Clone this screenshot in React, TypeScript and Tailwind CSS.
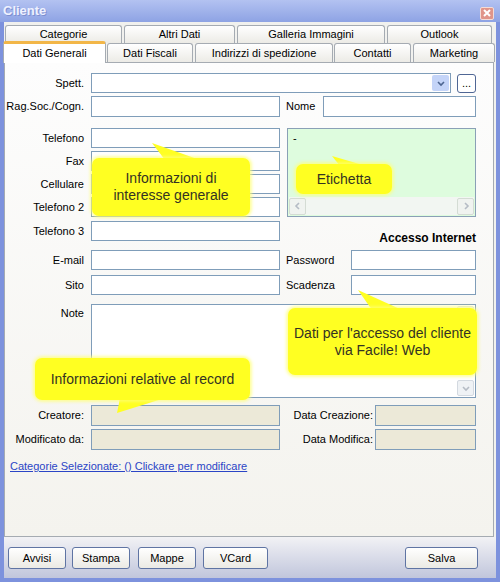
import React from "react";

const field = "border border-[#7f9db9] bg-white shrink-0";
const ro = "border border-[#7f9db9] bg-[#ece9d8] shrink-0";
const backTab =
  "flex items-center justify-center border border-b-0 border-[#a5abb2] rounded-t-[3px] bg-gradient-to-b from-white to-[#ecebe6] text-[11px] text-black";
const btn =
  "h-[22px] flex items-center justify-center rounded-[3px] border border-[#5f74a3] bg-gradient-to-b from-white to-[#ebeae4] text-[11px] text-black";

function Chevron({ dir, color = "#b5bcc5" }: { dir: "l" | "r" | "u" | "d"; color?: string }) {
  const pts = {
    l: "6,2 3,5 6,8",
    r: "4,2 7,5 4,8",
    u: "2,6 5,3 8,6",
    d: "2,4 5,7 8,4",
  }[dir];
  return (
    <svg width="10" height="10" viewBox="0 0 10 10">
      <polyline points={pts} fill="none" stroke={color} strokeWidth="1.6" />
    </svg>
  );
}

function Callout({
  box,
  tail,
  children,
}: {
  box: string;
  tail: string;
  children: React.ReactNode;
}) {
  return (
    <>
      <svg className="absolute left-0 top-0 pointer-events-none" width="500" height="582">
        <polygon points={tail} fill="#ffff22" />
      </svg>
      <div
        className={`absolute ${box} rounded-[7px] bg-[#ffff22] shadow-[0_0_3px_2px_rgba(255,255,120,0.7)] flex flex-col items-center justify-center text-[14px] leading-[17px] text-[#333322]`}
      >
        {children}
      </div>
    </>
  );
}

export default function App() {
  return (
    <div className="relative w-[500px] h-[582px] flex flex-col bg-[#7d92dd] font-['Liberation_Sans',Arial,sans-serif] text-[11px] text-black select-none">
      {/* title bar */}
      <div className="h-[22px] shrink-0 flex items-center justify-between bg-gradient-to-b from-[#b3c2f1] to-[#8ea3e4] pl-[3px] pr-[6px]">
        <span className="text-[13px] font-bold text-[#eef1ff] [text-shadow:1px_1px_0_#7d8fd0]">Cliente</span>
        <div className="w-[14px] h-[13px] mt-[4px] rounded-[2px] border border-[#f4dcd6] bg-[#e0958a] flex items-center justify-center">
          <svg width="8" height="8" viewBox="0 0 8 8">
            <path d="M1 1L7 7M7 1L1 7" stroke="white" strokeWidth="2" />
          </svg>
        </div>
      </div>

      {/* window body */}
      <div className="flex-1 mx-[4px] mb-[4px] flex flex-col bg-[#f1f1ee]">
        <div className="pt-[3px]">
          {/* back row of tabs */}
          <div className="flex gap-[2px] h-[18px] ml-[1px]">
            <div className={`${backTab} w-[117px]`}>Categorie</div>
            <div className={`${backTab} w-[111px]`}>Altri Dati</div>
            <div className={`${backTab} w-[148px]`}>Galleria Immagini</div>
            <div className={`${backTab} w-[105px]`}>Outlook</div>
          </div>
          {/* front row of tabs */}
          <div className="flex items-end h-[19px]">
            <div className="relative z-10 -ml-[1px] -mb-px w-[103px] h-[22px] flex items-center justify-center rounded-t-[3px] border border-b-0 border-[#a5abb2] border-t-[3px] border-t-[#f2b648] bg-white text-[11px]">
              Dati Generali
            </div>
            <div className={`${backTab} h-full w-[86px] ml-[1px]`}>Dati Fiscali</div>
            <div className={`${backTab} h-full w-[138px] ml-[2px]`}>Indirizzi di spedizione</div>
            <div className={`${backTab} h-full w-[77px] ml-[1px]`}>Contatti</div>
            <div className={`${backTab} h-full w-[82px] ml-[2px]`}>Marketing</div>
          </div>
        </div>

        {/* tab panel */}
        <div className="w-[490px] h-[475px] border border-[#a5abb2] bg-gradient-to-b from-[#fdfdfd] to-[#f4f3ee] pt-[10px]">
          {/* Spett */}
          <div className="flex items-center h-[20px]">
            <span className="w-[79px] text-right">Spett.</span>
            <div className={`${field} ml-[7px] w-[360px] h-[20px] flex items-center justify-end pr-[1px]`}>
              <div className="w-[17px] h-[16px] rounded-[2px] bg-[#c4d4f8] flex items-center justify-center">
                <Chevron dir="d" color="#4d6590" />
              </div>
            </div>
            <div className="ml-[6px] w-[19px] h-[19px] rounded-[3px] border border-[#4f6694] bg-white flex items-end justify-center pb-[3px] leading-none">
              ...
            </div>
          </div>

          {/* Rag.Soc */}
          <div className="flex items-center h-[21px] mt-[3px]">
            <span className="w-[79px] text-right">Rag.Soc./Cogn.</span>
            <div className={`${field} ml-[7px] w-[189px] h-[21px]`} />
            <span className="ml-[6px] w-[37px]">Nome</span>
            <div className={`${field} w-[153px] h-[21px]`} />
          </div>

          {/* phones + etichetta */}
          <div className="flex mt-[11px] h-[113px]">
            <div className="flex flex-col gap-[3px]">
              {["Telefono", "Fax", "Cellulare", "Telefono 2"].map((l) => (
                <div key={l} className="flex items-center h-[20px]">
                  <span className="w-[79px] text-right">{l}</span>
                  <div className={`${field} ml-[7px] w-[189px] h-[20px]`} />
                </div>
              ))}
              <div className="flex items-center h-[20px] mt-[1px]">
                <span className="w-[79px] text-right">Telefono 3</span>
                <div className={`${field} ml-[7px] w-[189px] h-[20px]`} />
              </div>
            </div>
            <div className="ml-[7px] w-[189px] flex flex-col">
              <div className="h-[89px] shrink-0 border border-[#8aa0b6] bg-[#defcde] flex flex-col">
                <div className="flex-1 pl-[5px] pt-[3px] leading-[12px]">-</div>
                <div className="h-[18px] mx-[1px] mb-[1px] bg-[#f2f6f2] flex items-center justify-between">
                  <div className="w-[17px] h-[17px] rounded-[2px] border border-[#d4dcd4] bg-[#f0f3f0] flex items-center justify-center">
                    <Chevron dir="l" />
                  </div>
                  <div className="w-[17px] h-[17px] rounded-[2px] border border-[#d4dcd4] bg-[#f0f3f0] flex items-center justify-center">
                    <Chevron dir="r" />
                  </div>
                </div>
              </div>
              <div className="mt-[15px] text-right font-bold text-[12px] leading-[12px]">Accesso Internet</div>
            </div>
          </div>

          {/* e-mail / password */}
          <div className="flex items-center h-[20px] mt-[9px]">
            <span className="w-[79px] text-right">E-mail</span>
            <div className={`${field} ml-[7px] w-[189px] h-[20px]`} />
            <span className="ml-[6px] w-[65px]">Password</span>
            <div className={`${field} w-[125px] h-[20px]`} />
          </div>
          <div className="flex items-center h-[20px] mt-[5px]">
            <span className="w-[79px] text-right">Sito</span>
            <div className={`${field} ml-[7px] w-[189px] h-[20px]`} />
            <span className="ml-[6px] w-[65px]">Scadenza</span>
            <div className={`${field} w-[125px] h-[20px]`} />
          </div>

          {/* note */}
          <div className="flex mt-[9px]">
            <span className="w-[79px] text-right pt-[2px] leading-[14px]">Note</span>
            <div className={`${field} ml-[7px] w-[385px] h-[94px] flex justify-end p-[1px]`}>
              <div className="w-[17px] flex flex-col justify-between">
                <div className="h-[16px] rounded-[2px] border border-[#dde2e8] bg-[#f4f6f8] flex items-center justify-center">
                  <Chevron dir="u" color="#c3c9d1" />
                </div>
                <div className="h-[16px] rounded-[2px] border border-[#d3d9e0] bg-[#eff2f5] flex items-center justify-center">
                  <Chevron dir="d" color="#b5bcc5" />
                </div>
              </div>
            </div>
          </div>

          {/* record info */}
          <div className="flex items-center h-[21px] mt-[7px]">
            <span className="w-[79px] text-right">Creatore:</span>
            <div className={`${ro} ml-[7px] w-[189px] h-[21px]`} />
            <span className="w-[95px] text-right pr-[2px]">Data Creazione:</span>
            <div className={`${ro} w-[101px] h-[21px]`} />
          </div>
          <div className="flex items-center h-[21px] mt-[3px]">
            <span className="w-[79px] text-right">Modificato da:</span>
            <div className={`${ro} ml-[7px] w-[189px] h-[21px]`} />
            <span className="w-[95px] text-right pr-[2px]">Data Modifica:</span>
            <div className={`${ro} w-[101px] h-[21px]`} />
          </div>

          <div className="mt-[10px] ml-[5px] leading-[12px]">
            <a href="#" className="text-[#2b45c6] underline">
              Categorie Selezionate: () Clickare per modificare
            </a>
          </div>
        </div>

        {/* button bar */}
        <div className="flex-1 flex items-start pt-[10px] pl-[4px] bg-gradient-to-b from-[#f2f2f5] to-[#c1c6dc]">
          <div className={`${btn} w-[58px]`}>Avvisi</div>
          <div className={`${btn} w-[58px] ml-[6px]`}>Stampa</div>
          <div className={`${btn} w-[58px] ml-[8px]`}>Mappe</div>
          <div className={`${btn} w-[65px] ml-[7px]`}>VCard</div>
          <div className={`${btn} w-[73px] ml-[137px]`}>Salva</div>
        </div>
      </div>

      {/* callouts */}
      <Callout box="left-[92px] top-[158px] w-[158px] h-[58px]" tail="152,143 165,160 200,160">
        <span>Informazioni di</span>
        <span>interesse generale</span>
      </Callout>
      <Callout box="left-[296px] top-[164px] w-[96px] h-[30px]" tail="332,156 340,166 366,166">
        <span>Etichetta</span>
      </Callout>
      <Callout box="left-[288px] top-[308px] w-[189px] h-[67px]" tail="358,290 372,310 402,310">
        <span>Dati per l'accesso del cliente</span>
        <span>via Facile! Web</span>
      </Callout>
      <Callout box="left-[35px] top-[358px] w-[215px] h-[42px]" tail="120,398 165,398 117,413">
        <span>Informazioni relative al record</span>
      </Callout>
    </div>
  );
}
